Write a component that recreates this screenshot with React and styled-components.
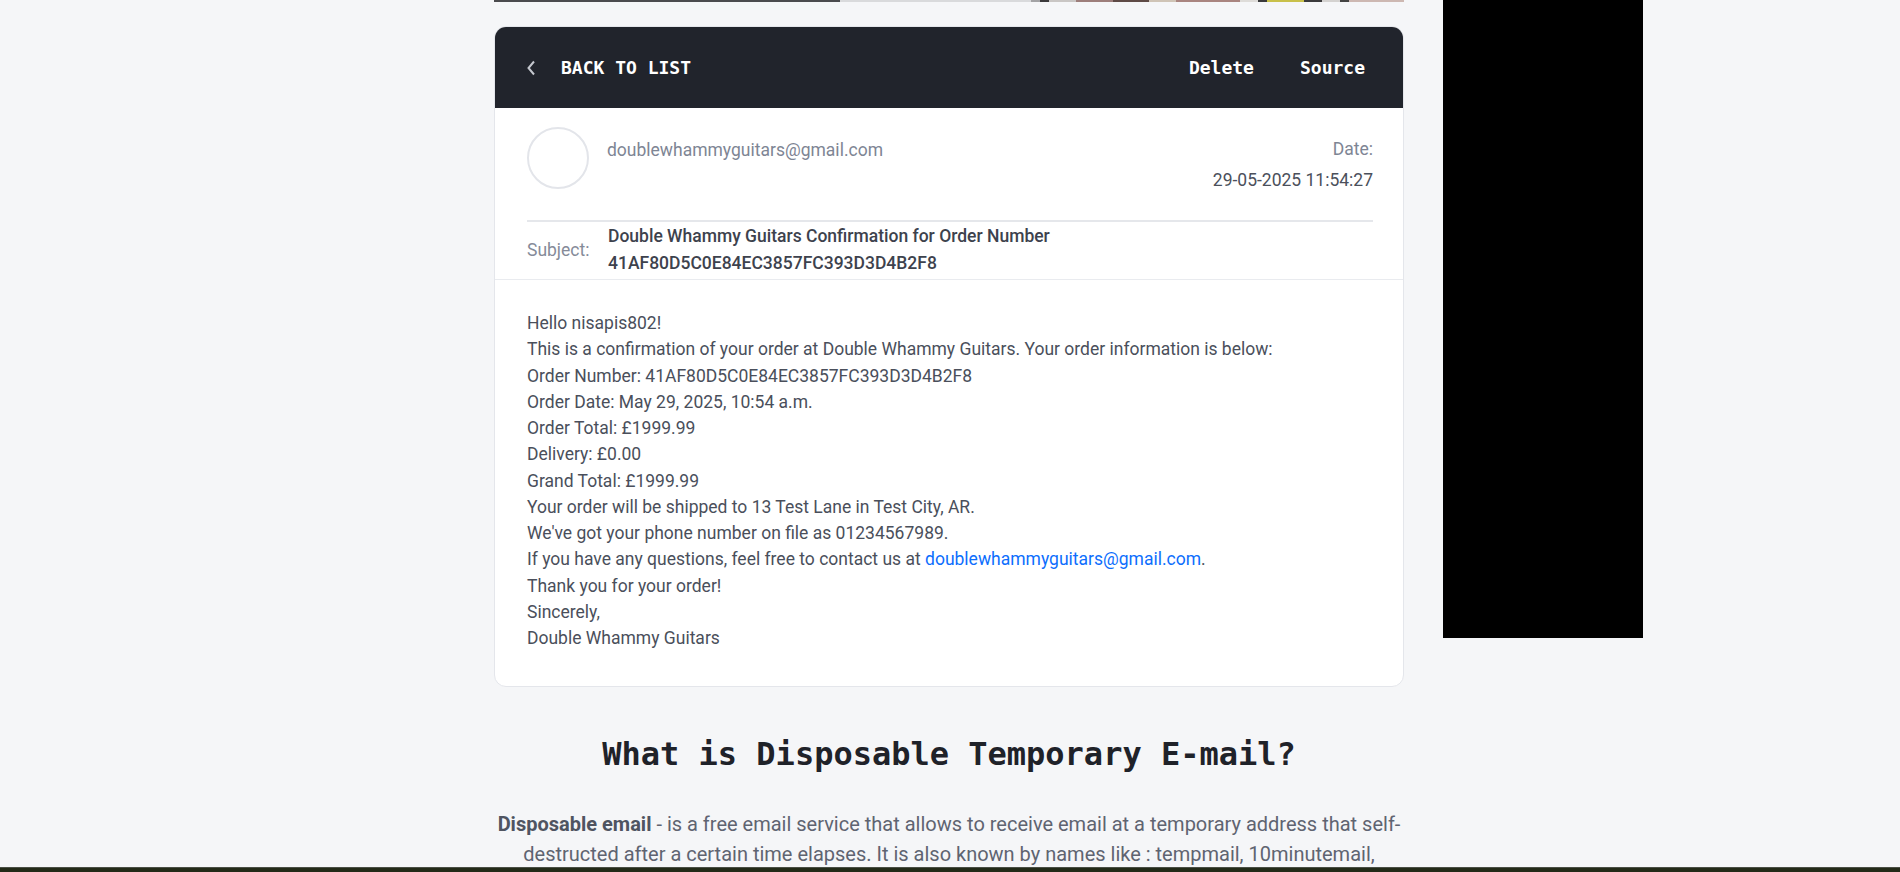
import React from 'react';
import styled, { createGlobalStyle } from 'styled-components';

const GlobalStyle = createGlobalStyle`
    html, body {
        margin: 0;
        padding: 0;
        background: #f5f6f8;
        overflow: hidden;
    }
    body {
        font-family: Roboto, "Liberation Sans", sans-serif;
    }
`;

const Page = styled.div`
    display: grid;
    grid-template-columns: 494px 910px 1fr;
    height: 100vh;
    overflow: hidden;
`;

const Main = styled.main`
    grid-column: 2;
    display: flex;
    flex-direction: column;
`;

const ImageStrip = styled.div`
    height: 2px;
    background: linear-gradient(
        to right,
        #4b4b4e 0%, #4b4b4e 38%,
        #d9dadc 38%, #d9dadc 59%,
        #a3a3a5 59%, #a3a3a5 60%,
        #3b3a3c 60%, #3b3a3c 61%,
        #c9c6c4 61%, #c9c6c4 64%,
        #9d7e7b 64%, #9d7e7b 68%,
        #5e4a46 68%, #5e4a46 72%,
        #cfc4b6 72%, #cfc4b6 75%,
        #a98580 75%, #a98580 82%,
        #dedcd9 82%, #dedcd9 84%,
        #3a3a3c 84%, #3a3a3c 85%,
        #c8c04a 85%, #c8c04a 89%,
        #3a3a3c 89%, #3a3a3c 91%,
        #d4d2d0 91%, #d4d2d0 93%,
        #444 93%, #444 94%,
        #cdb8b2 94%, #cdb8b2 100%
    );
`;

const Card = styled.section`
    margin-top: 24px;
    background: #fff;
    border: 1px solid #e4e6eb;
    border-radius: 12px;
    overflow: hidden;
`;

const Toolbar = styled.div`
    height: 81px;
    background: #21242c;
    display: flex;
    align-items: center;
    justify-content: space-between;
    padding: 0 38px 0 31px;
    font-family: "DejaVu Sans Mono", "Liberation Mono", monospace;
    font-weight: bold;
    font-size: 18px;
    color: #fff;
`;

const BackLink = styled.a`
    display: flex;
    align-items: center;
    gap: 25px;
    color: #fff;
    text-decoration: none;
    svg {
        display: block;
    }
`;

const Actions = styled.div`
    display: flex;
    gap: 46px;
`;

const ActionButton = styled.span`
    cursor: pointer;
`;

const Head = styled.div`
    padding: 19px 30px 0 32px;
    border-bottom: 1px solid #e9ebef;
`;

const SenderRow = styled.div`
    display: flex;
    justify-content: space-between;
    align-items: flex-start;
    padding-bottom: 27px;
    border-bottom: 2px solid #e5e7eb;
`;

const Sender = styled.div`
    display: flex;
    align-items: flex-start;
    gap: 18px;
`;

const Avatar = styled.div`
    width: 62px;
    height: 62px;
    box-sizing: border-box;
    border: 2px solid #e3e5ea;
    border-radius: 50%;
`;

const Muted = styled.div`
    color: #7e8594;
    font-size: 17.5px;
    line-height: 26px;
    margin-top: ${p => p.$top || 0}px;
`;

const Meta = styled.div`
    text-align: right;
    margin-top: 9px;
`;

const DateValue = styled.div`
    color: #4b505b;
    font-size: 17.5px;
    line-height: 26px;
    margin-top: 5px;
`;

const SubjectRow = styled.div`
    display: flex;
    align-items: center;
    padding: 1px 0 2px;
`;

const SubjectLabel = styled.div`
    width: 81px;
    flex-shrink: 0;
    color: #858b99;
    font-size: 17.5px;
`;

const SubjectText = styled.div`
    color: #3d424d;
    font-weight: 500;
    font-size: 17.5px;
    line-height: 27px;
    width: 460px;
`;

const Body = styled.div`
    padding: 30px 32px 35px;
    color: #4a4f5b;
    font-size: 17.5px;
    line-height: 1.5;
    a {
        color: #0d6efd;
        text-decoration: none;
    }
`;

const Heading = styled.h2`
    margin: 47px 0 0;
    text-align: center;
    font-family: "DejaVu Sans Mono", "Liberation Mono", monospace;
    font-weight: bold;
    font-size: 32px;
    line-height: 40px;
    color: #1f2229;
`;

const Intro = styled.p`
    margin: 35px 0 0;
    text-align: center;
    color: #5f6471;
    font-size: 20px;
    line-height: 30px;
    b {
        color: #4f5461;
    }
`;

const AdSlot = styled.aside`
    grid-column: 3;
    grid-row: 1;
    align-self: start;
    margin-left: 39px;
    width: 200px;
    height: 638px;
    background: #000;
`;

const BottomBar = styled.div`
    position: fixed;
    left: 0;
    right: 0;
    bottom: 0;
    height: 4px;
    background: #232a18;
    border-top: 1px solid #4a4f45;
`;

const lines = [
    'Hello nisapis802!',
    'This is a confirmation of your order at Double Whammy Guitars. Your order information is below:',
    'Order Number: 41AF80D5C0E84EC3857FC393D3D4B2F8',
    'Order Date: May 29, 2025, 10:54 a.m.',
    'Order Total: £1999.99',
    'Delivery: £0.00',
    'Grand Total: £1999.99',
    'Your order will be shipped to 13 Test Lane in Test City, AR.',
    "We've got your phone number on file as 01234567989.",
];

function App() {
    return (
        <>
            <GlobalStyle />
            <Page>
                <Main>
                    <ImageStrip />
                    <Card>
                        <Toolbar>
                            <BackLink>
                                <svg width="10" height="16" viewBox="0 0 10 16">
                                    <polyline points="8,1.5 2.5,8 8,14.5" fill="none" stroke="#c4c7ce" strokeWidth="2" />
                                </svg>
                                BACK TO LIST
                            </BackLink>
                            <Actions>
                                <ActionButton>Delete</ActionButton>
                                <ActionButton>Source</ActionButton>
                            </Actions>
                        </Toolbar>
                        <Head>
                            <SenderRow>
                                <Sender>
                                    <Avatar />
                                    <Muted $top={10}>doublewhammyguitars@gmail.com</Muted>
                                </Sender>
                                <Meta>
                                    <Muted>Date:</Muted>
                                    <DateValue>29-05-2025 11:54:27</DateValue>
                                </Meta>
                            </SenderRow>
                            <SubjectRow>
                                <SubjectLabel>Subject:</SubjectLabel>
                                <SubjectText>
                                    Double Whammy Guitars Confirmation for Order Number 41AF80D5C0E84EC3857FC393D3D4B2F8
                                </SubjectText>
                            </SubjectRow>
                        </Head>
                        <Body>
                            {lines.map(l => <div key={l}>{l}</div>)}
                            <div>
                                If you have any questions, feel free to contact us at{' '}
                                <a href="mailto:doublewhammyguitars@gmail.com">doublewhammyguitars@gmail.com</a>.
                            </div>
                            <div>Thank you for your order!</div>
                            <div>Sincerely,</div>
                            <div>Double Whammy Guitars</div>
                        </Body>
                    </Card>
                    <Heading>What is Disposable Temporary E-mail?</Heading>
                    <Intro>
                        <b>Disposable email</b> - is a free email service that allows to receive email at a temporary address that self-destructed after a certain time elapses. It is also known by names like : tempmail, 10minutemail, throwawaymail, fake-mail or trash-mail.
                    </Intro>
                </Main>
                <AdSlot />
            </Page>
            <BottomBar />
        </>
    );
}

export default App;
